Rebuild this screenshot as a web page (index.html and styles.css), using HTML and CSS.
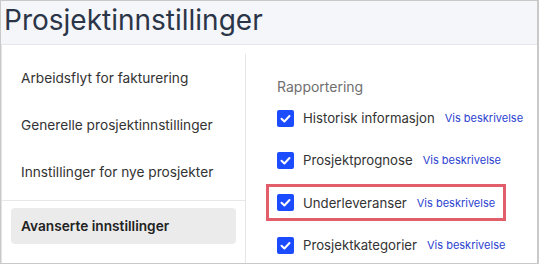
FILE: index.html
```html
<!DOCTYPE html>
<html lang="no">
<head>
<meta charset="utf-8">
<title>Prosjektinnstillinger</title>
<link rel="stylesheet" href="styles.css">
</head>
<body>
<div class="frame">
  <header class="header">
    <h1 class="title">Prosjektinnstillinger</h1>
  </header>
  <div class="panel">
    <nav class="sidebar">
      <div class="nav-item">Arbeidsflyt for fakturering</div>
      <div class="nav-item">Generelle prosjektinnstillinger</div>
      <div class="nav-item">Innstillinger for nye prosjekter</div>
      <div class="nav-divider"></div>
      <div class="nav-item nav-item--active">Avanserte innstillinger</div>
    </nav>
    <main class="content">
      <h2 class="section-title">Rapportering</h2>
      <div class="row">
        <span class="check"><svg viewBox="0 0 17 17" width="17" height="17"><polyline points="4.5,8.8 7.4,11.5 12.5,6" fill="none" stroke="#fff" stroke-width="2" stroke-linecap="round" stroke-linejoin="round"/></svg></span>
        <span class="label">Historisk informasjon</span>
        <a class="link">Vis beskrivelse</a>
      </div>
      <div class="row">
        <span class="check"><svg viewBox="0 0 17 17" width="17" height="17"><polyline points="4.5,8.8 7.4,11.5 12.5,6" fill="none" stroke="#fff" stroke-width="2" stroke-linecap="round" stroke-linejoin="round"/></svg></span>
        <span class="label">Prosjektprognose</span>
        <a class="link">Vis beskrivelse</a>
      </div>
      <div class="row">
        <div class="row-inner">
          <span class="check"><svg viewBox="0 0 17 17" width="17" height="17"><polyline points="4.5,8.8 7.4,11.5 12.5,6" fill="none" stroke="#fff" stroke-width="2" stroke-linecap="round" stroke-linejoin="round"/></svg></span>
          <span class="label">Underleveranser</span>
          <a class="link">Vis beskrivelse</a>
          <span class="highlight"></span>
        </div>
      </div>
      <div class="row">
        <span class="check"><svg viewBox="0 0 17 17" width="17" height="17"><polyline points="4.5,8.8 7.4,11.5 12.5,6" fill="none" stroke="#fff" stroke-width="2" stroke-linecap="round" stroke-linejoin="round"/></svg></span>
        <span class="label">Prosjektkategorier</span>
        <a class="link">Vis beskrivelse</a>
      </div>
    </main>
  </div>
</div>
</body>
</html>
```

FILE: styles.css
```css
* { box-sizing: border-box; }
html, body { margin: 0; padding: 0; }
body {
  width: 539px;
  height: 264px;
  overflow: hidden;
  font-family: Inter, "Noto Sans", sans-serif;
  background: #fff;
}
.frame {
  width: 539px;
  height: 264px;
  border: 1px solid #c9c9c9;
  border-right-width: 2px;
  display: flex;
  flex-direction: column;
  background: #f5f6fa;
}
.header {
  height: 43px;
  padding-left: 3px;
  flex-shrink: 0;
}
.title {
  margin: 0;
  font-size: 28px;
  font-weight: 400;
  line-height: 38px;
  color: #2b3548;
  letter-spacing: 0;
}
.panel {
  flex: 1;
  display: flex;
  background: #fff;
  border-top: 1px solid #e6e7ec;
  border-left: 1px solid #e3e3e3;
  padding-top: 9px;
  min-height: 0;
}
.sidebar {
  width: 244px;
  border-right: 1px solid #e6e6e6;
  display: flex;
  flex-direction: column;
}
.nav-item {
  height: 47px;
  margin: 0 9px;
  padding-left: 10px;
  display: flex;
  align-items: center;
  font-size: 13.7px;
  color: #333;
  flex-shrink: 0;
}
.nav-divider {
  height: 1px;
  background: #e8e8e8;
  margin-top: 5px;
  margin-bottom: 7px;
  flex-shrink: 0;
}
.nav-item--active {
  height: 36px;
  background: #ebebeb;
  border-radius: 4px;
  font-weight: 600;
  color: #222;
}
.content {
  flex: 1;
  padding-top: 23px;
  padding-left: 31px;
}
.section-title {
  margin: 0;
  font-size: 14px;
  font-weight: 400;
  line-height: 20px;
  color: #6f6f6f;
}
.row {
  height: 42.3px;
  display: flex;
  align-items: center;
}
.row-inner {
  position: relative;
  display: flex;
  align-items: center;
}
.check {
  width: 17px;
  height: 17px;
  border-radius: 2px;
  background: #1b4cff;
  display: inline-flex;
  flex-shrink: 0;
}
.check svg { display: block; }
.label {
  margin-left: 9px;
  font-size: 13.2px;
  color: #333;
}
.link {
  margin-left: 10px;
  font-size: 11px;
  color: #2b3fd0;
}
.highlight {
  position: absolute;
  left: -11px;
  right: -11px;
  top: -10px;
  bottom: -10px;
  border: 3px solid #e35e6b;
  pointer-events: none;
}
```
